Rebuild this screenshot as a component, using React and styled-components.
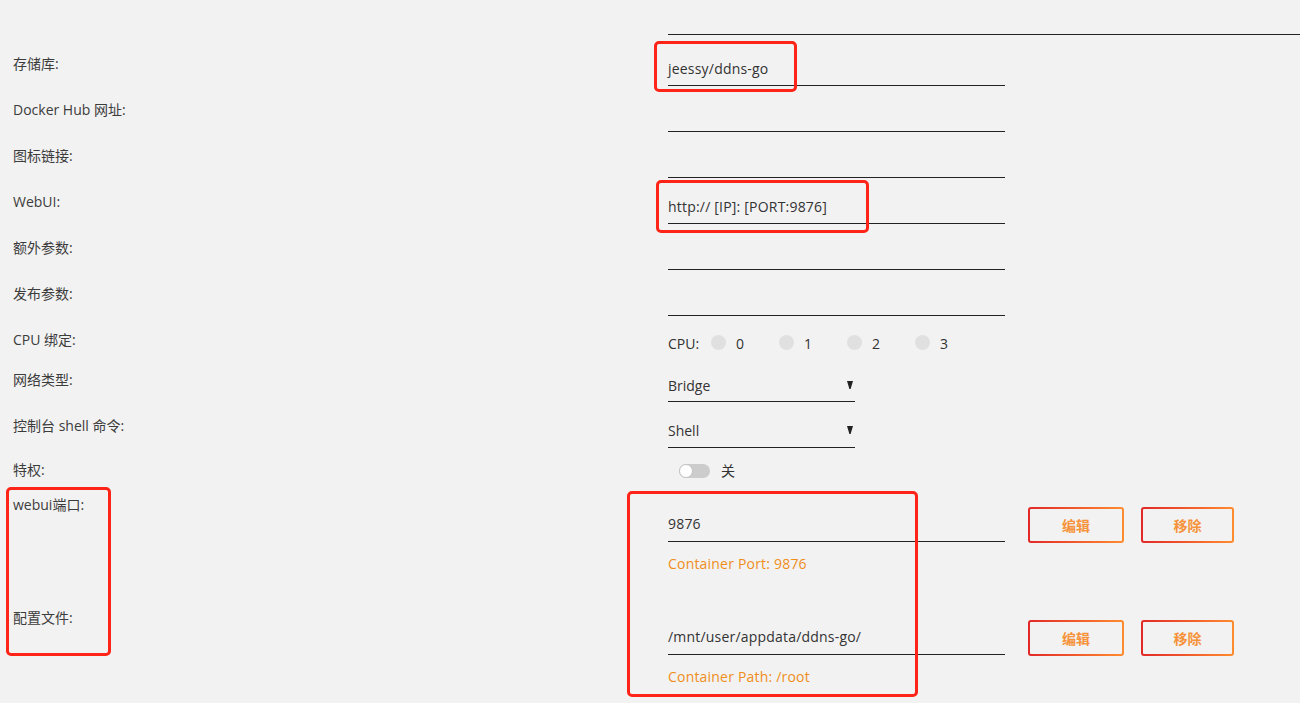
import React from "react"
import styled, { createGlobalStyle } from "styled-components"

const Global = createGlobalStyle`
  html, body {
    margin: 0;
    padding: 0;
    background: #f2f2f2;
  }
  body {
    font-family: "Open Sans", "Noto Sans CJK SC", sans-serif;
    font-size: 14px;
    color: #333;
  }
`

const Page = styled.div`
  position: relative;
  width: 1300px;
  height: 703px;
  overflow: hidden;
  background: #f2f2f2;
  padding-left: 13px;
  box-sizing: border-box;
`

const Row = styled.div`
  display: grid;
  grid-template-columns: 655px auto 1fr;
  height: ${(p) => p.h}px;
`

const Label = styled.div`
  padding-top: ${(p) => (p.top != null ? p.top : 15)}px;
  line-height: 18px;
  color: #3c3c3c;
  white-space: nowrap;
`

const TopLine = styled.div`
  grid-column: 2 / 4;
  border-bottom: 1px solid #222;
  height: 34px;
`

const Field = styled.div`
  width: 337px;
  height: ${(p) => p.h || 46}px;
  box-sizing: border-box;
  border-bottom: 1px solid #222;
  padding-top: ${(p) => p.pad || 20}px;
  line-height: 18px;
  color: #333;
  letter-spacing: 0.2px;
  margin-top: ${(p) => p.mt || 0}px;
`

const Cpu = styled.div`
  display: flex;
  align-items: center;
  padding-top: 15px;
  line-height: 18px;
  color: #333;
`

const CpuLabel = styled.span`
  width: 43px;
`

const CpuOption = styled.span`
  display: flex;
  align-items: center;
  width: 68px;
  gap: 10px;
`

const Radio = styled.span`
  width: 15px;
  height: 15px;
  border-radius: 50%;
  background: #e0e0e0;
  margin-top: -3px;
`

const Select = styled.div`
  width: 187px;
  height: 46px;
  box-sizing: border-box;
  border-bottom: 1px solid #222;
  padding-top: ${(p) => p.pad}px;
  line-height: 18px;
  display: flex;
  justify-content: space-between;
  color: #333;
`

const Arrow = styled.svg`
  width: 6px;
  height: 8px;
  margin-top: 4px;
  margin-right: 2px;
`

const Toggle = styled.div`
  display: flex;
  align-items: center;
  gap: 11px;
  padding-left: 11px;
  padding-top: 13px;
  line-height: 18px;
`

const Track = styled.span`
  position: relative;
  width: 31px;
  height: 14px;
  border-radius: 7px;
  background: #cccccc;
  display: inline-block;
`

const Knob = styled.span`
  position: absolute;
  left: 0;
  top: 0;
  width: 14px;
  height: 14px;
  box-sizing: border-box;
  border-radius: 50%;
  background: #fff;
  border: 1px solid #c4c4c4;
`

const PathCell = styled.div`
  display: flex;
  flex-direction: column;
`

const Hint = styled.div`
  margin-top: 13px;
  line-height: 18px;
  color: #ef8e1a;
  letter-spacing: 0.2px;
`

const Buttons = styled.div`
  display: flex;
  gap: 17px;
  margin-top: 26px;
  margin-left: 23px;
  align-self: start;
`

const Btn = styled.button`
  width: ${(p) => p.w}px;
  height: 36px;
  box-sizing: border-box;
  border: 2px solid transparent;
  border-radius: 3px;
  background: linear-gradient(#f2f2f2, #f2f2f2) padding-box,
    linear-gradient(90deg, #e22828, #ff8c2f) border-box;
  color: #f6923a;
  font-family: "Open Sans", "Noto Sans CJK SC", sans-serif;
  font-size: 14px;
  font-weight: bold;
  padding: 0;
`

const Mark = styled.div`
  position: absolute;
  left: ${(p) => p.x}px;
  top: ${(p) => p.y}px;
  width: ${(p) => p.w}px;
  height: ${(p) => p.hh}px;
  box-sizing: border-box;
  border: 3px solid #fe2418;
  border-radius: 5px;
  pointer-events: none;
`

const fields = [
  ["存储库:", "jeessy/ddns-go"],
  ["Docker Hub 网址:", ""],
  ["图标链接:", ""],
  ["WebUI:", "http:// [IP]: [PORT:9876]"],
  ["额外参数:", ""],
  ["发布参数:", ""],
]

const paths = [
  ["webui端口:", "9876", "Container Port: 9876"],
  ["配置文件:", "/mnt/user/appdata/ddns-go/", "Container Path: /root"],
]

function DownArrow() {
  return (
    <Arrow viewBox="0 0 6 8">
      <path d="M0 0 H6 L3.6 8 H2.4 Z" fill="#222" />
    </Arrow>
  )
}

export default function App() {
  return (
    <>
      <Global />
      <Page>
        <Row h={40}>
          <div />
          <TopLine />
        </Row>
        {fields.map(([label, value]) => (
          <Row h={46} key={label}>
            <Label>{label}</Label>
            <Field>{value}</Field>
          </Row>
        ))}
        <Row h={40}>
          <Label>CPU 绑定:</Label>
          <Cpu>
            <CpuLabel>CPU:</CpuLabel>
            {[0, 1, 2, 3].map((n) => (
              <CpuOption key={n}>
                <Radio />
                {n}
              </CpuOption>
            ))}
          </Cpu>
        </Row>
        <Row h={46}>
          <Label>网络类型:</Label>
          <Select pad={21}>
            Bridge
            <DownArrow />
          </Select>
        </Row>
        <Row h={46}>
          <Label>控制台 shell 命令:</Label>
          <Select pad={20}>
            Shell
            <DownArrow />
          </Select>
        </Row>
        <Row h={33}>
          <Label top={13}>特权:</Label>
          <Toggle>
            <Track>
              <Knob />
            </Track>
            关
          </Toggle>
        </Row>
        {paths.map(([label, value, hint]) => (
          <Row h={113} key={label}>
            <Label>{label}</Label>
            <PathCell>
              <Field h={35} pad={8} mt={26}>
                {value}
              </Field>
              <Hint>{hint}</Hint>
            </PathCell>
            <Buttons>
              <Btn w={96}>编辑</Btn>
              <Btn w={93}>移除</Btn>
            </Buttons>
          </Row>
        ))}
        <Mark x={654} y={41} w={143} hh={51} />
        <Mark x={656} y={180} w={213} hh={53} />
        <Mark x={627} y={491} w={291} hh={206} />
        <Mark x={6} y={487} w={105} hh={169} />
      </Page>
    </>
  )
}
